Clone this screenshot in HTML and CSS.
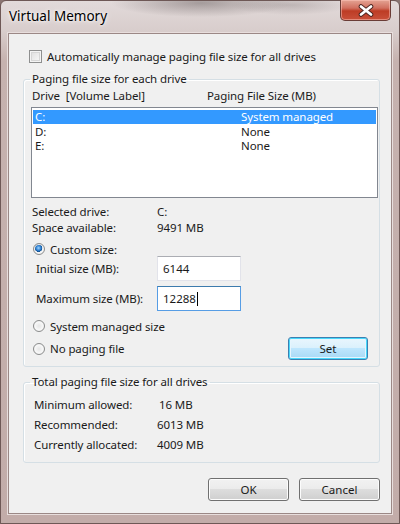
FILE: index.html
```html
<!DOCTYPE html>
<html lang="en">
<head>
    <meta charset="UTF-8">
    <title>Virtual Memory</title>
    <link rel="stylesheet" href="styles.css">
</head>
<body>
    <div class="window">
        <div class="titlebar">
            <span class="title">Virtual Memory</span>
            <button class="close-btn" aria-label="Close">
                <svg width="18" height="13" viewBox="0 0 18 13">
                    <path d="M4 2.5 L14 10.5 M14 2.5 L4 10.5" stroke="#4a2420" stroke-width="4.6" stroke-linecap="round"/>
                    <path d="M4 2.5 L14 10.5 M14 2.5 L4 10.5" stroke="#fff" stroke-width="2.8" stroke-linecap="round"/>
                </svg>
            </button>
        </div>

        <div class="client">
            <label class="check-row">
                <span class="checkbox"></span>
                Automatically manage paging file size for all drives
            </label>

            <fieldset class="group">
                <legend>Paging file size for each drive</legend>
                <div class="list-head">
                    <span class="col-drive">Drive&nbsp;&nbsp;[Volume Label]</span>
                    <span>Paging File Size (MB)</span>
                </div>
                <div class="listbox">
                    <div class="list-row selected"><span class="col-name">C:</span><span>System managed</span></div>
                    <div class="list-row"><span class="col-name">D:</span><span>None</span></div>
                    <div class="list-row"><span class="col-name">E:</span><span>None</span></div>
                </div>

                <div class="info">
                    <div class="info-row"><span class="info-label">Selected drive:</span><span>C:</span></div>
                    <div class="info-row"><span class="info-label">Space available:</span><span>9491 MB</span></div>
                </div>

                <label class="radio-row custom">
                    <span class="radio checked"></span>
                    Custom size:
                </label>
                <div class="field-row">
                    <span class="field-label">Initial size (MB):</span>
                    <div class="textbox">6144</div>
                </div>
                <div class="field-row second">
                    <span class="field-label">Maximum size (MB):</span>
                    <div class="textbox focused">12288<span class="caret"></span></div>
                </div>
                <label class="radio-row system">
                    <span class="radio"></span>
                    System managed size
                </label>
                <div class="last-row">
                    <label class="radio-row">
                        <span class="radio"></span>
                        No paging file
                    </label>
                    <button class="btn btn-default">Set</button>
                </div>
            </fieldset>

            <fieldset class="group totals">
                <legend>Total paging file size for all drives</legend>
                <div class="total-row"><span class="total-label">Minimum allowed:</span><span class="total-value min">16 MB</span></div>
                <div class="total-row"><span class="total-label">Recommended:</span><span class="total-value">6013 MB</span></div>
                <div class="total-row"><span class="total-label">Currently allocated:</span><span class="total-value">4009 MB</span></div>
            </fieldset>

            <div class="actions">
                <button class="btn">OK</button>
                <button class="btn">Cancel</button>
            </div>
        </div>
    </div>
</body>
</html>
```

FILE: styles.css
```css
* {
    box-sizing: border-box;
}

html, body {
    margin: 0;
    padding: 0;
}

body {
    width: 400px;
    height: 524px;
    overflow: hidden;
    background: #8a7572;
    font-family: "Noto Sans", "Open Sans", sans-serif;
    font-size: 11.5px;
    letter-spacing: -0.1px;
    color: #1a1a1a;
}

/* Window frame */
.window {
    height: 524px;
    border: 1px solid #6e5856;
    border-radius: 6px 6px 0 0;
    background:
        radial-gradient(ellipse 90px 14px at 200px 2px, rgba(90, 80, 80, 0.45), transparent),
        radial-gradient(ellipse 60px 10px at 290px 4px, rgba(110, 100, 100, 0.3), transparent),
        linear-gradient(to bottom, #e2dada 0, #d8cdcc 30px, #c6b2af 60px, #c2aca9 100%);
}

.titlebar {
    display: flex;
    align-items: flex-start;
    height: 32px;
}

.title {
    padding: 7px 0 0 8px;
    font-size: 13.5px;
    line-height: 17px;
    letter-spacing: 0;
    color: #000;
    text-shadow: 0 0 6px #fff, 0 0 3px #fff;
}

.close-btn {
    margin-left: auto;
    margin-right: 8px;
    margin-top: -1px;
    width: 51px;
    height: 21px;
    padding: 0;
    display: flex;
    align-items: center;
    justify-content: center;
    border: 1px solid #6a3c36;
    border-top: none;
    border-radius: 0 0 5px 5px;
    background: linear-gradient(to bottom, #e4a494 0, #d17060 40%, #bd3c25 55%, #c9503a 100%);
    box-shadow: inset 0 0 0 1px rgba(255, 200, 190, 0.5);
}

/* Client area */
.client {
    margin: 0 7px;
    height: 481px;
    border: 1px solid #9b8886;
    background: #f0f0f0;
    box-shadow: 0 0 0 1px #e8dedd;
    padding: 16px 11px 0 14px;
}

.check-row {
    display: flex;
    align-items: center;
    gap: 5px;
    margin-left: 6px;
    height: 13px;
    line-height: 13px;
}

.checkbox {
    width: 13px;
    height: 13px;
    border: 1px solid #8e8f8f;
    background: linear-gradient(135deg, #dcdcdc, #fbfbfb);
    box-shadow: inset 0 0 0 1px #f4f4f4, inset 0 0 0 2px #d6d6d6;
}

/* Group boxes */
.group {
    margin: 0;
    padding: 0 0 6px 6px;
    border: 1px solid #d5dfe5;
    border-radius: 3px;
    box-shadow: inset 1px 1px 0 #fff;
    width: 357px;
}

.group legend {
    padding: 0 2px;
    line-height: 16px;
}

.check-row + .group {
    margin-top: 8px;
}

.list-head {
    display: flex;
    margin-top: 2px;
    padding-left: 2px;
    line-height: 14px;
}

.col-drive {
    width: 175px;
}

.listbox {
    margin: 4px 0 0 1px;
    width: 347px;
    height: 91px;
    border: 1px solid #828790;
    background: #fff;
    padding: 2px 1px;
}

.list-row {
    display: flex;
    height: 14.5px;
    line-height: 14px;
    padding-left: 2px;
}

.list-row.selected {
    background: #3399ff;
    color: #fff;
    height: 13.5px;
    line-height: 13px;
    margin-bottom: 1px;
}

.col-name {
    width: 206px;
}

.info {
    margin-top: 5px;
    padding-left: 2px;
}

.info-row,
.field-row,
.total-row {
    display: flex;
    align-items: center;
}

.info-row {
    height: 16px;
}

.info-label {
    width: 125px;
}

.radio-row {
    display: flex;
    align-items: center;
    gap: 5px;
    margin-left: 3px;
    height: 14px;
}

.radio-row.custom {
    margin-top: 7px;
}

.radio-row.system {
    margin-top: 8px;
}

.radio {
    width: 12px;
    height: 12px;
    border-radius: 50%;
    border: 1px solid #8b8c8c;
    background: radial-gradient(circle at 50% 50%, #e6e6e6 0, #f7f7f7 55%, #d9d9d9 100%);
    box-shadow: inset 0 0 0 1px #f5f5f5;
}

.radio.checked {
    background:
        radial-gradient(circle at 45% 40%, #9fd4ff 0, #2d7fd0 30%, #134f8e 46%, transparent 50%),
        radial-gradient(circle at 50% 50%, #e6e6e6 0, #f7f7f7 55%, #d9d9d9 100%);
}

.field-row {
    height: 25px;
    padding-left: 6px;
}

.field-row.second {
    margin-top: 5px;
}

.field-label {
    width: 121px;
}

.textbox {
    width: 84px;
    height: 25px;
    border: 1px solid #e2e3ea;
    border-top-color: #abadb3;
    background: #fff;
    padding: 0 5px;
    display: flex;
    align-items: center;
    letter-spacing: 0;
}

.textbox.focused {
    border-color: #569de5;
    border-top-color: #3d7bad;
}

.caret {
    width: 1px;
    height: 14px;
    background: #000;
    margin-left: 1px;
}

.last-row {
    display: flex;
    align-items: center;
    justify-content: space-between;
    margin-top: 4px;
    padding-right: 11px;
}

/* Buttons */
.btn {
    width: 81px;
    height: 23px;
    padding: 0;
    font-family: inherit;
    font-size: 11.5px;
    color: #1a1a1a;
    border: 1px solid #707070;
    border-radius: 3px;
    background: linear-gradient(to bottom, #f2f2f2 0, #ebebeb 50%, #dddddd 50%, #cfcfcf 100%);
    box-shadow: inset 0 0 0 1px #fcfcfc;
}

.btn-default {
    width: 80px;
    border-color: #3c7fb1;
    background: linear-gradient(to bottom, #eaf6fd 0, #d9f0fc 50%, #bee6fd 50%, #a7d9f5 100%);
    box-shadow: inset 0 0 0 1px #48d8fb, inset 0 0 0 2px #e6f5fd;
}

.totals {
    margin-top: 7px;
    padding-bottom: 8px;
}

.total-row {
    height: 20px;
    padding-left: 4px;
}

.total-row:first-of-type {
    margin-top: 4px;
}

.total-label {
    width: 123px;
}

.total-value.min {
    margin-left: 2px;
}

.actions {
    display: flex;
    justify-content: flex-end;
    gap: 10px;
    margin-top: 15px;
}
```
